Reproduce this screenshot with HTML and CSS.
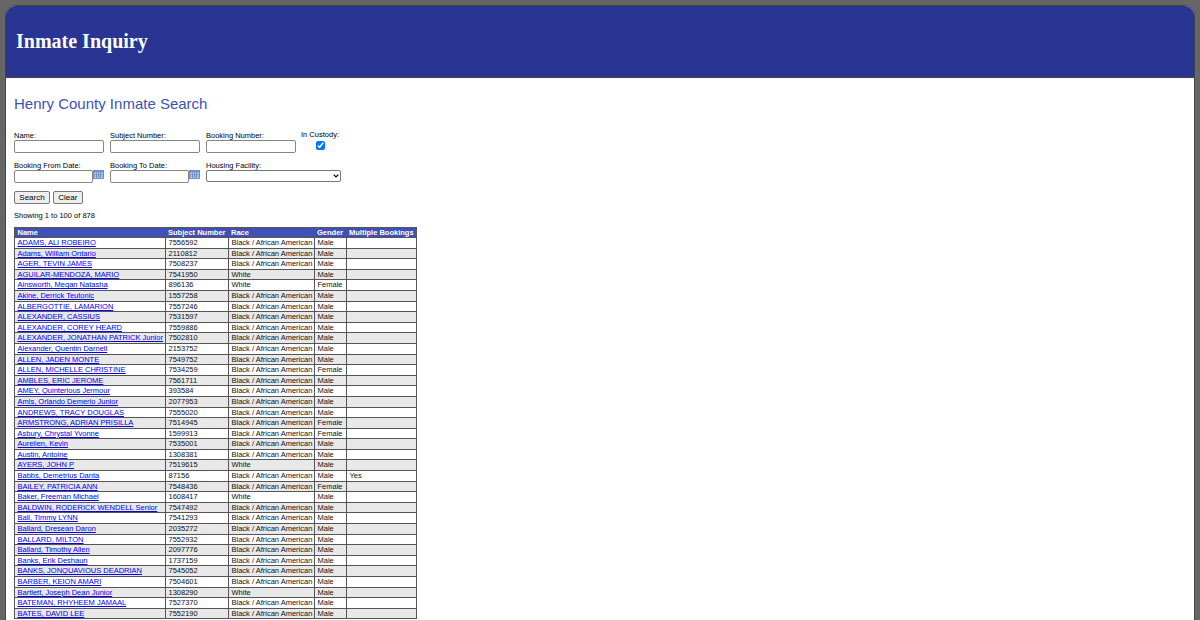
FILE: index.html
```html
<!DOCTYPE html>
<html lang="en">
<head>
<meta charset="utf-8">
<title>Inmate Inquiry</title>
<link rel="stylesheet" href="styles.css">
</head>
<body>
<div class="page">
  <header class="banner"><h1>Inmate Inquiry</h1></header>
  <main class="content">
    <h2>Henry County Inmate Search</h2>
    <form class="search">
      <div class="fields">
        <label class="field"><span>Name:</span><input type="text"></label>
        <label class="field"><span>Subject Number:</span><input type="text"></label>
        <label class="field"><span>Booking Number:</span><input type="text"></label>
        <label class="field custody"><span>In Custody:</span><input type="checkbox" checked></label>
      </div>
      <div class="fields">
        <label class="field"><span>Booking From Date:</span><div class="date"><input type="text"><svg class="cal" viewBox="0 0 11 9" width="11" height="9"><rect width="11" height="9" fill="#6b8fd0"/><rect x="1" y="2.5" width="9" height="5.5" fill="#b9cdea"/><path d="M1 4.3h9M1 6.1h9M3.5 2.5v5.5M5.5 2.5v5.5M7.5 2.5v5.5" stroke="#5a7cbc" stroke-width=".6"/></svg></div></label>
        <label class="field"><span>Booking To Date:</span><div class="date"><input type="text"><svg class="cal" viewBox="0 0 11 9" width="11" height="9"><rect width="11" height="9" fill="#6b8fd0"/><rect x="1" y="2.5" width="9" height="5.5" fill="#b9cdea"/><path d="M1 4.3h9M1 6.1h9M3.5 2.5v5.5M5.5 2.5v5.5M7.5 2.5v5.5" stroke="#5a7cbc" stroke-width=".6"/></svg></div></label>
        <label class="field"><span>Housing Facility:</span><span class="select-box"><select><option></option></select><svg class="chev" viewBox="0 0 6 4" width="6" height="4"><path d="M.7.7 3 3 5.3.7" fill="none" stroke="#000" stroke-width="1.2"/></svg></span></label>
      </div>
      <div class="actions"><button type="button">Search</button><button type="button">Clear</button></div>
    </form>
    <p class="count">Showing 1 to 100 of 878</p>
    <table class="results">
      <thead><tr><th>Name</th><th>Subject Number</th><th>Race</th><th>Gender</th><th>Multiple Bookings</th></tr></thead>
      <tbody>
        <tr><td><a href="#">ADAMS, ALI ROBEIRO</a></td><td>7556592</td><td>Black / African American</td><td>Male</td><td></td></tr>
        <tr><td><a href="#">Adams, William Ontario</a></td><td>2110812</td><td>Black / African American</td><td>Male</td><td></td></tr>
        <tr><td><a href="#">AGER, TEVIN JAMES</a></td><td>7508237</td><td>Black / African American</td><td>Male</td><td></td></tr>
        <tr><td><a href="#">AGUILAR-MENDOZA, MARIO</a></td><td>7541950</td><td>White</td><td>Male</td><td></td></tr>
        <tr><td><a href="#">Ainsworth, Megan Natasha</a></td><td>896136</td><td>White</td><td>Female</td><td></td></tr>
        <tr><td><a href="#">Akine, Derrick Teutonic</a></td><td>1557258</td><td>Black / African American</td><td>Male</td><td></td></tr>
        <tr><td><a href="#">ALBERGOTTIE, LAMARION</a></td><td>7557246</td><td>Black / African American</td><td>Male</td><td></td></tr>
        <tr><td><a href="#">ALEXANDER, CASSIUS</a></td><td>7531597</td><td>Black / African American</td><td>Male</td><td></td></tr>
        <tr><td><a href="#">ALEXANDER, COREY HEARD</a></td><td>7559886</td><td>Black / African American</td><td>Male</td><td></td></tr>
        <tr><td><a href="#">ALEXANDER, JONATHAN PATRICK Junior</a></td><td>7502810</td><td>Black / African American</td><td>Male</td><td></td></tr>
        <tr><td><a href="#">Alexander, Quentin Darnell</a></td><td>2153752</td><td>Black / African American</td><td>Male</td><td></td></tr>
        <tr><td><a href="#">ALLEN, JADEN MONTE</a></td><td>7549752</td><td>Black / African American</td><td>Male</td><td></td></tr>
        <tr><td><a href="#">ALLEN, MICHELLE CHRISTINE</a></td><td>7534259</td><td>Black / African American</td><td>Female</td><td></td></tr>
        <tr><td><a href="#">AMBLES, ERIC JEROME</a></td><td>7561711</td><td>Black / African American</td><td>Male</td><td></td></tr>
        <tr><td><a href="#">AMEY, Quinterious Jermour</a></td><td>393584</td><td>Black / African American</td><td>Male</td><td></td></tr>
        <tr><td><a href="#">Amis, Orlando Demerio Junior</a></td><td>2077953</td><td>Black / African American</td><td>Male</td><td></td></tr>
        <tr><td><a href="#">ANDREWS, TRACY DOUGLAS</a></td><td>7555020</td><td>Black / African American</td><td>Male</td><td></td></tr>
        <tr><td><a href="#">ARMSTRONG, ADRIAN PRISILLA</a></td><td>7514945</td><td>Black / African American</td><td>Female</td><td></td></tr>
        <tr><td><a href="#">Asbury, Chrystal Yvonne</a></td><td>1599913</td><td>Black / African American</td><td>Female</td><td></td></tr>
        <tr><td><a href="#">Aurelien, Kevin</a></td><td>7535001</td><td>Black / African American</td><td>Male</td><td></td></tr>
        <tr><td><a href="#">Austin, Antoine</a></td><td>1308381</td><td>Black / African American</td><td>Male</td><td></td></tr>
        <tr><td><a href="#">AYERS, JOHN P</a></td><td>7519615</td><td>White</td><td>Male</td><td></td></tr>
        <tr><td><a href="#">Babbs, Demetrius Danta</a></td><td>87156</td><td>Black / African American</td><td>Male</td><td>Yes</td></tr>
        <tr><td><a href="#">BAILEY, PATRICIA ANN</a></td><td>7548436</td><td>Black / African American</td><td>Female</td><td></td></tr>
        <tr><td><a href="#">Baker, Freeman Michael</a></td><td>1608417</td><td>White</td><td>Male</td><td></td></tr>
        <tr><td><a href="#">BALDWIN, RODERICK WENDELL Senior</a></td><td>7547492</td><td>Black / African American</td><td>Male</td><td></td></tr>
        <tr><td><a href="#">Ball, Timmy LYNN</a></td><td>7541293</td><td>Black / African American</td><td>Male</td><td></td></tr>
        <tr><td><a href="#">Ballard, Dresean Daron</a></td><td>2035272</td><td>Black / African American</td><td>Male</td><td></td></tr>
        <tr><td><a href="#">BALLARD, MILTON</a></td><td>7552932</td><td>Black / African American</td><td>Male</td><td></td></tr>
        <tr><td><a href="#">Ballard, Timothy Allen</a></td><td>2097776</td><td>Black / African American</td><td>Male</td><td></td></tr>
        <tr><td><a href="#">Banks, Erik Deshaun</a></td><td>1737159</td><td>Black / African American</td><td>Male</td><td></td></tr>
        <tr><td><a href="#">BANKS, JONQUAVIOUS DEADRIAN</a></td><td>7545052</td><td>Black / African American</td><td>Male</td><td></td></tr>
        <tr><td><a href="#">BARBER, KEION AMARI</a></td><td>7504601</td><td>Black / African American</td><td>Male</td><td></td></tr>
        <tr><td><a href="#">Bartlett, Joseph Dean Junior</a></td><td>1308290</td><td>White</td><td>Male</td><td></td></tr>
        <tr><td><a href="#">BATEMAN, RHYHEEM JAMAAL</a></td><td>7527370</td><td>Black / African American</td><td>Male</td><td></td></tr>
        <tr><td><a href="#">BATES, DAVID LEE</a></td><td>7552190</td><td>Black / African American</td><td>Male</td><td></td></tr>
      </tbody>
    </table>
  </main>
</div>
</body>
</html>
```
FILE: styles.css
```css
html, body { margin: 0; height: 100%; overflow: hidden; }
body { background: #666; font-family: "Liberation Sans", Arial, sans-serif; font-size: 7.5px; color: #000; }
.page { box-sizing: border-box; margin: 5px 5px 0; height: 100%; background: #fff; border: 1px solid #444; border-radius: 10px 10px 0 0; overflow: hidden; }
.banner { height: 71px; background: #283593; border-bottom: 1px solid #444; display: flex; align-items: center; padding-left: 10px; }
.banner h1 { margin: 0; color: #fff; font: bold 20px "Liberation Serif", "Times New Roman", serif; }
.content { padding: 16px 8px 0; }
h2 { margin: 0 0 18px; color: #3f51b5; font: normal 15px "Liberation Sans", Arial, sans-serif; line-height: 19px; }
.fields { display: flex; gap: 6px; margin-bottom: 8px; }
.field { display: flex; flex-direction: column; width: 90px; line-height: 9px; }
.field input[type=text] { box-sizing: border-box; width: 90px; height: 13px; margin: 0; padding: 0 2px; font-size: 7.5px; border: 1px solid #858585; border-radius: 2px; background: #fff; }
.custody { align-items: center; width: 38px; margin-top: -1px; margin-left: -1px; white-space: nowrap; }
.custody input { margin: 2px 0 0; width: 9px; height: 9px; accent-color: #0075ff; }
.date { display: flex; align-items: flex-start; width: 90px; }
.date input[type=text] { width: 79px; }
.cal { display: block; flex: none; }
.select-box { position: relative; display: block; width: 135px; height: 12px; }
select { display: block; box-sizing: border-box; appearance: none; width: 135px; height: 12px; margin: 0; padding: 0; font-size: 7.5px; border: 1px solid #777; border-radius: 2px; background: #fff; }
.chev { position: absolute; right: 2px; top: 4px; pointer-events: none; }
.actions { display: flex; gap: 3px; margin-top: 5px; }
button { height: 13px; padding: 0 4.3px; margin: 0; font: 8px "Liberation Sans", Arial, sans-serif; background: #efefef; border: 1px solid #767676; border-radius: 2px; color: #000; }
.count { margin: 7px 0 6px; line-height: 10px; }
.results { border-collapse: collapse; table-layout: fixed; width: 403px; border: 1px solid #555; line-height: 9.6px; }
.results th { box-sizing: border-box; background: #3f51b5; color: #fff; text-align: left; font-weight: bold; padding: 0 2.5px; white-space: nowrap; line-height: 9px; }
.results th:nth-child(1) { width: 151px; }
.results th:nth-child(2) { width: 63px; }
.results th:nth-child(3) { width: 86px; }
.results th:nth-child(4) { width: 32px; }
.results td { border: 1px solid #555; padding: 0 2.5px; white-space: nowrap; color: #111; }
.results tbody tr:nth-child(even) { background: #e8e8e8; }
.results a { color: #0000ee; }
```
